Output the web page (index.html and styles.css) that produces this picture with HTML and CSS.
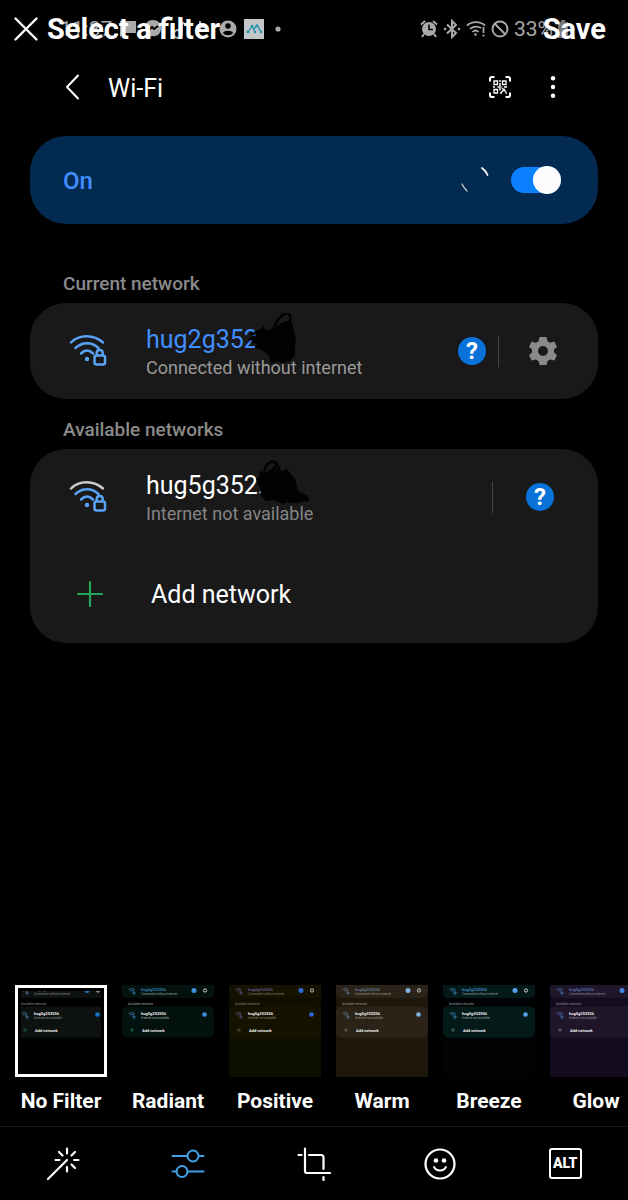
FILE: index.html
```html
<!DOCTYPE html>
<html lang="en">
<head>
<meta charset="utf-8">
<meta name="viewport" content="width=device-width, initial-scale=1">
<title>Select a filter</title>
<link rel="stylesheet" href="styles.css">
</head>
<body>
<div class="editor">
  <header class="editor-bar">
    <button class="close" aria-label="Close"><svg width="24" height="24" viewBox="0 0 24 24"><path d="M1.500 1.500l21 21M22.500 1.500l-21 21" fill="none" stroke="currentColor" stroke-width="2.400" stroke-linecap="round"/></svg></button>
    <h1 class="editor-title">Select a filter</h1>
    <button class="save">Save</button>
  </header>

  <main class="photo">
    <div class="status">
      <div class="status-left">
        <span class="clock">11:37</span>
        <svg width="18" height="20" viewBox="0 0 18 20"><path d="M1 2h16v12H6l-5 4z" fill="currentColor"/></svg>
        <svg width="18" height="20" viewBox="0 0 18 20"><path d="M9 1C4 1 1 4.500 1 9c0 3 1 5 3 6v4l4-2c6 1 9-3 9-8s-3-8-8-8z" fill="currentColor"/><path d="M4 12l4-4 2 2 4-3" fill="none" stroke="#000" stroke-width="2"/></svg>
        <svg width="18" height="20" viewBox="0 0 18 20"><path d="M13 3v11M13 3l4 3" fill="none" stroke="currentColor" stroke-width="2"/><circle cx="9" cy="15" r="4" fill="none" stroke="currentColor" stroke-width="2"/></svg>
        <svg width="18" height="20" viewBox="0 0 18 20"><path d="M6 2v11M2 8h12" fill="none" stroke="currentColor" stroke-width="2"/></svg>
        <svg width="18" height="20" viewBox="0 0 18 20"><circle cx="9" cy="10" r="8.500" fill="currentColor"/><circle cx="9" cy="7" r="2.700" fill="#000"/><path d="M4 14c1-3 9-3 10 0-2 3-8 3-10 0z" fill="#000"/></svg>
        <svg class="app-badge" width="20" height="20" viewBox="0 0 20 20"><path d="M0 0h20v20H0z" fill="#c4c7c9"/><path d="M4 13l4-6 3 6M10 10l3-4 4 7" fill="none" stroke="#208fae" stroke-width="1.300"/><g fill="#208fae"><circle cx="4" cy="13" r="1.400"/><circle cx="8" cy="7" r="1.300"/><circle cx="11" cy="13" r="1.300"/><circle cx="13" cy="7" r="1.300"/><circle cx="17" cy="13" r="1.300"/></g></svg>
        <svg width="6" height="20" viewBox="0 0 6 20"><circle cx="3" cy="10" r="2.600" fill="currentColor"/></svg>
      </div>
      <div class="status-right">
        <svg width="18" height="20" viewBox="0 0 18 20"><circle cx="9" cy="10" r="7" fill="currentColor"/><path d="M1 5.500l4-3.500M17 5.500L13 2M4 15l-2 3M14 15l2 3" stroke="currentColor" stroke-width="2"/><path d="M9 5.500v5h4" fill="none" stroke="#000" stroke-width="1.600"/></svg>
        <svg width="18" height="20" viewBox="0 0 18 20"><path d="M4 5.500l9 8.500-4 4V2l4 4-9 8.500" fill="none" stroke="currentColor" stroke-width="2"/><circle cx="2" cy="10" r="1.300" fill="currentColor"/><circle cx="16" cy="10" r="1.300" fill="currentColor"/></svg>
        <svg width="20" height="20" viewBox="0 0 20 20"><g fill="none" stroke="currentColor" stroke-width="1.700"><path d="M1 6.500C6 2 14 2 19 6.500M4 10c3-3 8-3 11-1M6.500 13c2-2 4-2 6 0M17.500 8v6"/></g><circle cx="9.500" cy="15.500" r="1.300" fill="currentColor"/><circle cx="17.500" cy="16.500" r="1.100" fill="currentColor"/></svg>
        <svg width="18" height="20" viewBox="0 0 18 20"><g fill="none" stroke="currentColor" stroke-width="1.900"><circle cx="9" cy="10" r="7.500"/><path d="M4 5l10 10"/></g></svg>
        <span class="battery">33%</span>
        <svg width="10" height="20" viewBox="0 0 10 20"><path d="M3 1h4v2h3v16H0V3h3z" fill="#777"/></svg>
      </div>
    </div>

    <div class="wifi-head">
      <button class="back" aria-label="Back"><svg width="16" height="26" viewBox="0 0 16 26"><path d="M14 1.500L3 13l11 11.500" fill="none" stroke="currentColor" stroke-width="2" stroke-linecap="round" stroke-linejoin="round"/></svg></button>
      <h2 class="wifi-title">Wi-Fi</h2>
      <button class="qr" aria-label="Scan QR code"><svg width="22" height="22" viewBox="0 0 22 22"><g fill="none" stroke="currentColor"><path d="M1 5.500V3q0-2 2-2h2.500M16.500 1H19q2 0 2 2v2.500M21 16.500V19q0 2-2 2h-2.500M5.500 21H3q-2 0-2-2v-2.500" stroke-width="2"/><path d="M5 5h3.500v3.500H5zM13.500 5H17v3.500h-3.500zM5 13.500h3.500V17H5z" stroke-width="1.300"/><path d="M11 4v2M11 7v3M4 11h2M8.500 11h4M15 11h3M11 12v2.500M13 12l4 4M12 16.500l4-3.500M16.500 17h1.500M11 17h2" stroke-width="1.400"/></g></svg></button>
      <button class="more" aria-label="More options"><svg width="6" height="22" viewBox="0 0 6 22"><g fill="currentColor"><circle cx="3" cy="2.300" r="2.200"/><circle cx="3" cy="11" r="2.200"/><circle cx="3" cy="19.700" r="2.200"/></g></svg></button>
    </div>

    <section class="power">
      <label class="power-label" for="wifi-on">On</label>
      <svg class="spinner" width="30" height="30" viewBox="0 0 30 30"><g fill="none" stroke="#fff" stroke-linecap="round"><path d="M22 3q4 3 5.500 7" stroke-width="1.700"/><path d="M2 19q2 4 5 7" stroke-width="1.300" opacity=".75"/></g></svg>
      <input class="switch" id="wifi-on" type="checkbox" role="switch" checked>
    </section>

    <h3 class="caption">Current network</h3>
    <section class="card">
      <div class="network">
        <svg class="signal" width="38" height="34" viewBox="0 0 38 34"><g fill="none" stroke="#58a3f5" stroke-width="2.500" stroke-linecap="round" stroke-linejoin="round"><path d="M2 8.500C10 0 25 0 34 8.500M6.500 14C13 7.500 23 7.500 29.500 14M12 19.500c4-4 8-4 12 0"/><rect x="25.500" y="21.500" width="10.500" height="9" rx="2"/><path d="M27.700 21v-2c0-4 6-4 6 0v2"/></g><circle cx="18" cy="25" r="2.200" fill="#58a3f5"/></svg>
        <div class="network-text">
          <div class="ssid ssid-active">hug2g352<svg class="scribble" width="60" height="54" viewBox="0 0 60 54"><path d="M5 19l8-3 3-3 2 4 8-1 5-5 8-3 5 1 2 8 2 11-2 7 1 7-5 6-8 2-5-2-6 3-2-8-4-4-9-5 3-2-9-3 7-3-7-2 8-2z" fill="#020202"/><path d="M25 17C33-3 44-4 42 7c-1 8-13 12-9 16l10-11c3 17 3 27 2 30-5 7-13 7-21 3M3 21l15-2L3 26l17 3-12 5" fill="none" stroke="#020202" stroke-width="2.500" stroke-linecap="round"/></svg></div>
          <div class="detail">Connected without internet</div>
        </div>
        <button class="help" aria-label="Help">?</button>
        <span class="rule"></span>
        <button class="gear" aria-label="Network settings"><svg width="28" height="28" viewBox="0 0 28 28"><path fill="#8a8a8a" fill-rule="evenodd" d="M10.500 0h7l1 4.200 2.700 1.600 4.200-1.300 2.600 5.500-3 2.600v3l3 2.600-2.600 5.400-4.200-1.200-2.700 1.500-1 4.100h-7l-1-4.100-2.700-1.500-4.200 1.200L0 18.200l3-2.600v-3L0 10l2.600-5.500 4.200 1.300 2.700-1.600zM14 9a5 5 0 1 0 0 10 5 5 0 0 0 0-10z"/></svg></button>
      </div>
    </section>

    <h3 class="caption">Available networks</h3>
    <section class="card">
      <div class="network network-far">
        <svg class="signal" width="38" height="34" viewBox="0 0 38 34"><g fill="none" stroke="#58a3f5" stroke-width="2.500" stroke-linecap="round" stroke-linejoin="round"><path stroke="#d0cbc8" d="M2 8.500C10 0 25 0 34 8.500"/><path d="M6.500 14C13 7.500 23 7.500 29.500 14M12 19.500c4-4 8-4 12 0"/><rect x="25.500" y="21.500" width="10.500" height="9" rx="2"/><path d="M27.700 21v-2c0-4 6-4 6 0v2"/></g><circle cx="18" cy="25" r="2.200" fill="#58a3f5"/></svg>
        <div class="network-text">
          <div class="ssid">hug5g352:<svg class="scribble scribble-far" width="60" height="54" viewBox="0 0 60 54"><path d="M3 20l6-5 7-3 6-3 6 4 6-3 4 5 4 5 3 12 10 5 1 3-7 3-6-1-8 1-5 2-9-4-8 1-6-6 1-7-3-4z" fill="#020202"/><path d="M9 18C15-3 24-1 27 14M6 22L24 6l12 24M6 25l8 12 26 6 15-2M7 13l13 26 12-25 10 20" fill="none" stroke="#020202" stroke-width="2.500" stroke-linecap="round"/></svg></div>
          <div class="detail">Internet not available</div>
        </div>
        <span class="rule"></span>
        <button class="help" aria-label="Help">?</button>
      </div>
      <button class="add"><svg width="26" height="26" viewBox="0 0 26 26"><path d="M13 1v24M1 13h24" stroke="#22a558" stroke-width="2.200" stroke-linecap="round"/></svg>Add network</button>
    </section>
  </main>

  <div class="filters">
    <button class="filter filter-none" aria-pressed="true">
      <span class="thumb"><svg viewBox="0 0 92 92"><rect class="t-card" y="-10" width="92" height="23" rx="5"/><rect class="t-card" y="21.500" width="92" height="31" rx="5"/><path class="t-wifi" d="M6.500 4.500q3-2 6 0M8 6q1.500-1 4 0M11 7h2v2h-2zM6.500 28.500q3-2 6 0M8 30q1.500-1 4 0M11 31h2v2h-2z"/><text class="t-name t-blue" x="19" y="5.500">hug2g352556</text><text class="t-sub" x="19" y="9.500">Connected without internet</text><text class="t-sub" x="6" y="19.500">Available networks</text><text class="t-name" x="19" y="30">hug5g352556</text><text class="t-sub" x="19" y="33.500">Internet not available</text><text class="t-add" x="20" y="47">Add network</text><path class="t-plus" d="M8 45h4M10 43v4"/><circle class="t-help" cx="72" cy="5.500" r="2.500"/><circle class="t-gear" cx="83" cy="5.500" r="1.600"/><circle class="t-help" cx="82.500" cy="29.500" r="2.300"/></svg></span>
      <span class="name">No Filter</span>
    </button>
    <button class="filter filter-radiant">
      <span class="thumb"><svg viewBox="0 0 92 92"><rect class="t-card" y="-10" width="92" height="23" rx="5"/><rect class="t-card" y="21.500" width="92" height="31" rx="5"/><path class="t-wifi" d="M6.500 4.500q3-2 6 0M8 6q1.500-1 4 0M11 7h2v2h-2zM6.500 28.500q3-2 6 0M8 30q1.500-1 4 0M11 31h2v2h-2z"/><text class="t-name t-blue" x="19" y="5.500">hug2g352556</text><text class="t-sub" x="19" y="9.500">Connected without internet</text><text class="t-sub" x="6" y="19.500">Available networks</text><text class="t-name" x="19" y="30">hug5g352556</text><text class="t-sub" x="19" y="33.500">Internet not available</text><text class="t-add" x="20" y="47">Add network</text><path class="t-plus" d="M8 45h4M10 43v4"/><circle class="t-help" cx="72" cy="5.500" r="2.500"/><circle class="t-gear" cx="83" cy="5.500" r="1.600"/><circle class="t-help" cx="82.500" cy="29.500" r="2.300"/></svg></span>
      <span class="name">Radiant</span>
    </button>
    <button class="filter filter-positive">
      <span class="thumb"><svg viewBox="0 0 92 92"><rect class="t-card" y="-10" width="92" height="23" rx="5"/><rect class="t-card" y="21.500" width="92" height="31" rx="5"/><path class="t-wifi" d="M6.500 4.500q3-2 6 0M8 6q1.500-1 4 0M11 7h2v2h-2zM6.500 28.500q3-2 6 0M8 30q1.500-1 4 0M11 31h2v2h-2z"/><text class="t-name t-blue" x="19" y="5.500">hug2g352556</text><text class="t-sub" x="19" y="9.500">Connected without internet</text><text class="t-sub" x="6" y="19.500">Available networks</text><text class="t-name" x="19" y="30">hug5g352556</text><text class="t-sub" x="19" y="33.500">Internet not available</text><text class="t-add" x="20" y="47">Add network</text><path class="t-plus" d="M8 45h4M10 43v4"/><circle class="t-help" cx="72" cy="5.500" r="2.500"/><circle class="t-gear" cx="83" cy="5.500" r="1.600"/><circle class="t-help" cx="82.500" cy="29.500" r="2.300"/></svg></span>
      <span class="name">Positive</span>
    </button>
    <button class="filter filter-warm">
      <span class="thumb"><svg viewBox="0 0 92 92"><rect class="t-card" y="-10" width="92" height="23" rx="5"/><rect class="t-card" y="21.500" width="92" height="31" rx="5"/><path class="t-wifi" d="M6.500 4.500q3-2 6 0M8 6q1.500-1 4 0M11 7h2v2h-2zM6.500 28.500q3-2 6 0M8 30q1.500-1 4 0M11 31h2v2h-2z"/><text class="t-name t-blue" x="19" y="5.500">hug2g352556</text><text class="t-sub" x="19" y="9.500">Connected without internet</text><text class="t-sub" x="6" y="19.500">Available networks</text><text class="t-name" x="19" y="30">hug5g352556</text><text class="t-sub" x="19" y="33.500">Internet not available</text><text class="t-add" x="20" y="47">Add network</text><path class="t-plus" d="M8 45h4M10 43v4"/><circle class="t-help" cx="72" cy="5.500" r="2.500"/><circle class="t-gear" cx="83" cy="5.500" r="1.600"/><circle class="t-help" cx="82.500" cy="29.500" r="2.300"/></svg></span>
      <span class="name">Warm</span>
    </button>
    <button class="filter filter-breeze">
      <span class="thumb"><svg viewBox="0 0 92 92"><rect class="t-card" y="-10" width="92" height="23" rx="5"/><rect class="t-card" y="21.500" width="92" height="31" rx="5"/><path class="t-wifi" d="M6.500 4.500q3-2 6 0M8 6q1.500-1 4 0M11 7h2v2h-2zM6.500 28.500q3-2 6 0M8 30q1.500-1 4 0M11 31h2v2h-2z"/><text class="t-name t-blue" x="19" y="5.500">hug2g352556</text><text class="t-sub" x="19" y="9.500">Connected without internet</text><text class="t-sub" x="6" y="19.500">Available networks</text><text class="t-name" x="19" y="30">hug5g352556</text><text class="t-sub" x="19" y="33.500">Internet not available</text><text class="t-add" x="20" y="47">Add network</text><path class="t-plus" d="M8 45h4M10 43v4"/><circle class="t-help" cx="72" cy="5.500" r="2.500"/><circle class="t-gear" cx="83" cy="5.500" r="1.600"/><circle class="t-help" cx="82.500" cy="29.500" r="2.300"/></svg></span>
      <span class="name">Breeze</span>
    </button>
    <button class="filter filter-glow">
      <span class="thumb"><svg viewBox="0 0 92 92"><rect class="t-card" y="-10" width="92" height="23" rx="5"/><rect class="t-card" y="21.500" width="92" height="31" rx="5"/><path class="t-wifi" d="M6.500 4.500q3-2 6 0M8 6q1.500-1 4 0M11 7h2v2h-2zM6.500 28.500q3-2 6 0M8 30q1.500-1 4 0M11 31h2v2h-2z"/><text class="t-name t-blue" x="19" y="5.500">hug2g352556</text><text class="t-sub" x="19" y="9.500">Connected without internet</text><text class="t-sub" x="6" y="19.500">Available networks</text><text class="t-name" x="19" y="30">hug5g352556</text><text class="t-sub" x="19" y="33.500">Internet not available</text><text class="t-add" x="20" y="47">Add network</text><path class="t-plus" d="M8 45h4M10 43v4"/><circle class="t-help" cx="72" cy="5.500" r="2.500"/></svg></span>
      <span class="name">Glow</span>
    </button>
  </div>

  <nav class="tools">
    <button class="tool" aria-label="Enhance"><svg width="34" height="34" viewBox="0 0 34 34"><path d="M2 32l19-19M21 1.500v5M21 20v4.500M9.500 13h4M28 13h4.500M13 5l3.500 3.500M29 5l-3.500 3.500M25.500 17.500L29 21" fill="none" stroke="currentColor" stroke-width="2.200" stroke-linecap="round"/></svg></button>
    <button class="tool tool-active" aria-label="Filters"><svg width="34" height="34" viewBox="0 0 34 34"><g fill="none" stroke="currentColor" stroke-width="2" stroke-linecap="round"><path d="M1.500 9h14.500M28 9h4.500M1.500 24.500h4M17 24.500h15.500"/><circle cx="22" cy="9" r="5.500"/><circle cx="11" cy="24.500" r="5.500"/></g></svg></button>
    <button class="tool" aria-label="Crop"><svg width="34" height="34" viewBox="0 0 34 34"><path d="M1.500 8h3M8 1.500V24q0 2 2 2h23M12 8h12q2.500 0 2.500 2.500V22M26.500 30v3" fill="none" stroke="currentColor" stroke-width="2.200" stroke-linecap="round"/></svg></button>
    <button class="tool" aria-label="Stickers"><svg width="34" height="34" viewBox="0 0 34 34"><circle cx="17" cy="17" r="14.500" fill="none" stroke="currentColor" stroke-width="2.200"/><circle cx="13" cy="13.500" r="2.300" fill="currentColor"/><circle cx="21" cy="13.500" r="2.300" fill="currentColor"/><path d="M11 20c2.500 4.500 9.500 4.500 12 0" fill="none" stroke="currentColor" stroke-width="2" stroke-linecap="round"/></svg></button>
    <button class="tool"><span class="alt">ALT</span></button>
  </nav>
</div>
</body>
</html>
```
FILE: styles.css
```css
* { box-sizing: border-box; }

body {
  margin: 0;
  background: #000;
  color: #fff;
  font-family: Roboto, "Liberation Sans", sans-serif;
}

button {
  margin: 0;
  padding: 0;
  border: 0;
  background: none;
  color: inherit;
  font: inherit;
  text-align: left;
}

svg { display: block; flex: none; }

h1, h2, h3 { margin: 0; }

.editor {
  position: relative;
  display: flex;
  flex-direction: column;
  min-height: 100vh;
  overflow: hidden;
}

/* Editor controls float over the photo */
.editor-bar {
  position: absolute;
  z-index: 1;
  top: 0;
  left: 0;
  right: 0;
  display: flex;
  align-items: center;
  height: 58px;
  padding: 0 22px 0 14px;
}

.editor-title {
  flex: 1;
  margin-left: 9px;
  font-size: 29px;
  font-weight: 700;
  line-height: 32px;
}

.save { font-size: 29px; font-weight: 700; line-height: 32px; }

.photo { flex: 1; }

.status {
  display: flex;
  justify-content: space-between;
  height: 58px;
  padding: 0 60px;
  color: #aaa;
  font-size: 21px;
}

.status-left, .status-right { display: flex; align-items: center; }
.status-left { gap: 7px; }
.status-right { gap: 5px; }
.app-badge { margin-right: 4px; }

.wifi-head {
  display: flex;
  align-items: center;
  height: 58px;
  padding: 0 72px 0 64px;
}

.wifi-title {
  flex: 1;
  margin-left: 28px;
  padding-top: 2px;
  font-size: 25px;
  font-weight: 400;
}

.more { margin-left: 39px; }

.power {
  display: flex;
  align-items: center;
  height: 88px;
  margin: 20px 30px 0;
  padding: 0 37px 0 33px;
  border-radius: 36px;
  background: #032a50;
}

.power-label {
  flex: 1;
  padding-top: 2px;
  color: #418eff;
  font-size: 24px;
  font-weight: 500;
}

.switch {
  position: relative;
  width: 50px;
  height: 26px;
  margin: 0 0 0 21px;
  border-radius: 13px;
  background: #0a80ff;
  appearance: none;
}

.switch::after {
  content: "";
  position: absolute;
  top: -1px;
  right: 0;
  width: 28px;
  height: 28px;
  border-radius: 50%;
  background: #fcfcfc;
}

.caption {
  padding: 20px 63px 8px;
  color: #8b8b8b;
  font-size: 19px;
  font-weight: 500;
  line-height: 22px;
}

.power + .caption { padding-top: 49px; }

.card {
  margin: 0 30px;
  border-radius: 36px;
  background: #191919;
}

.network {
  display: flex;
  align-items: center;
  height: 96px;
  padding: 0 41px 0 39px;
}

.network-text { flex: 1; margin-left: 39px; padding-top: 2px; }

.ssid {
  display: flex;
  font-size: 25px;
  line-height: 32px;
}

.ssid-active { color: #418eff; }

.scribble { margin: -11px 0 -11px -10px; }
.scribble-far { margin-left: -11px; }

.detail {
  color: #999;
  font-size: 18px;
  line-height: 24px;
}

.network-far .detail { color: #858585; }

.help {
  width: 28px;
  height: 28px;
  border-radius: 50%;
  background: #0872d8;
  font-size: 24px;
  font-weight: 700;
  line-height: 28px;
  text-align: center;
}

.rule { width: 1px; height: 31px; margin: 0 30px 0 12px; background: #444; }
.network-far { padding-right: 44px; }
.network-far .rule { margin-right: 33px; }

.add {
  display: flex;
  align-items: center;
  gap: 48px;
  width: 100%;
  height: 98px;
  padding: 0 47px;
  font-size: 25px;
}

.filters {
  display: flex;
  gap: 15px;
  padding: 0 15px 11px;
}

.filter { flex: none; width: 92px; }

.thumb {
  position: relative;
  display: block;
  height: 92px;
  overflow: hidden;
  background: var(--back);
}

.name {
  display: block;
  margin-top: 10px;
  font-size: 21px;
  font-weight: 700;
  line-height: 28px;
  text-align: center;
  white-space: nowrap;
}

.filter-none .thumb::after {
  content: "";
  position: absolute;
  inset: 0;
  border: 3px solid #fff;
  box-shadow: inset 0 0 0 3px #000;
}

.t-card { fill: var(--card); }
.t-wifi { fill: none; stroke: var(--tint); stroke-width: 1; opacity: .8; }
.t-name { fill: #eee; font-size: 4px; font-weight: 700; }
.t-blue { fill: var(--tint); }
.t-sub { fill: var(--sub); font-size: 3px; }
.t-add { fill: #eee; font-size: 4px; font-weight: 700; }
.t-plus { stroke: var(--plus); stroke-width: 1; }
.t-help { fill: var(--help); }
.t-gear { fill: none; stroke: #ccc; stroke-width: 1; }

.filter-none { --back: #000; --card: #0d110f; --tint: #4a7ca8; --sub: #888; --plus: #1c5b38; --help: #1674c4; }
.filter-radiant { --back: #000; --card: #03120e; --tint: #357cb4; --sub: #9aa2a0; --plus: #186044; --help: #3b8fe0; }
.filter-positive { --back: #0f0f00; --card: #161200; --tint: #5b5488; --sub: #88806a; --plus: #4b4a35; --help: #2b6cd8; }
.filter-warm { --back: #1e170c; --card: #2b2318; --tint: #5c7488; --sub: #9c9180; --plus: #5c5a40; --help: #7ab4e4; }
.filter-breeze { --back: #000203; --card: #041a18; --tint: #3f84bd; --sub: #8c9c9c; --plus: #446a60; --help: #5aa2ec; }
.filter-glow { --back: #150b1e; --card: #201629; --tint: #4f6cae; --sub: #8d8698; --plus: #5a6068; --help: #3f86dc; }

.tools {
  display: flex;
  height: 74px;
  border-top: 1px solid #1a1a1a;
}

.tool { display: flex; flex: 1; align-items: center; justify-content: center; }
.tool-active { color: #40a0e6; }

.alt {
  width: 33px;
  border: 2px solid #fff;
  border-radius: 3px;
  font-size: 14px;
  font-weight: 900;
  line-height: 27px;
  text-align: center;
}
```
